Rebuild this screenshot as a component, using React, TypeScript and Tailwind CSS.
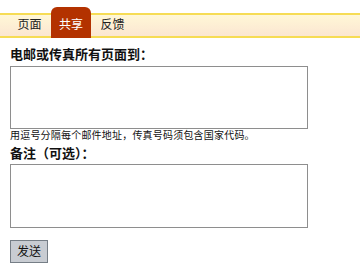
const FONT = "font-['Liberation_Sans','Noto_Sans_CJK_SC',sans-serif]";

const TABS = [
  { label: '页面', active: false },
  { label: '共享', active: true },
  { label: '反馈', active: false },
];

const App = () => {
  return (
    <div className={`${FONT} w-[360px] h-[271px] bg-white text-[#222]`}>
      <div className="pt-[7px]">
        <div className="h-[31px] flex items-end relative">
          <div className="absolute left-0 right-0 top-[6px] bottom-0 border-y-2 border-[#f6dc55] bg-gradient-to-b from-[#fff7d6] to-[#fbe6d2]" />
          <div className="relative flex items-stretch h-full pl-[8px] pb-[2px]">
            {TABS.map((tab) => (
              <div
                key={tab.label}
                className={
                  tab.active
                    ? 'bg-[#b33200] text-white rounded-t-[6px] w-[40px] flex items-center justify-center text-[12px] pt-[5px] -mb-[2px]'
                    : 'w-[43px] flex items-center justify-center text-[12px] pt-[7px] text-[#222]'
                }
              >
                {tab.label}
              </div>
            ))}
          </div>
        </div>
      </div>
      <div className="px-[10px] pt-[9px]">
        <div className="text-[13px] font-bold leading-[16px] text-[#111]">
          电邮或传真所有页面到：
        </div>
        <textarea className="block mt-[3px] w-[298px] h-[63px] border border-[#8e8e8e] resize-none" />
        <div className="text-[10px] leading-[12px] mt-[1px] tracking-[0.2px] text-[#111]">
          用逗号分隔每个邮件地址，传真号码须包含国家代码。
        </div>
        <div className="text-[13px] font-bold leading-[16px] mt-[4px] text-[#111]">
          备注（可选）：
        </div>
        <textarea className="block mt-[2px] w-[298px] h-[64px] border border-[#8e8e8e] resize-none" />
        <button
          type="button"
          className="mt-[12px] w-[38px] h-[23px] bg-[#c8ccd2] border border-[#767e86] text-[12px] text-[#111] flex items-center justify-center"
        >
          发送
        </button>
      </div>
    </div>
  );
};

export default App;
